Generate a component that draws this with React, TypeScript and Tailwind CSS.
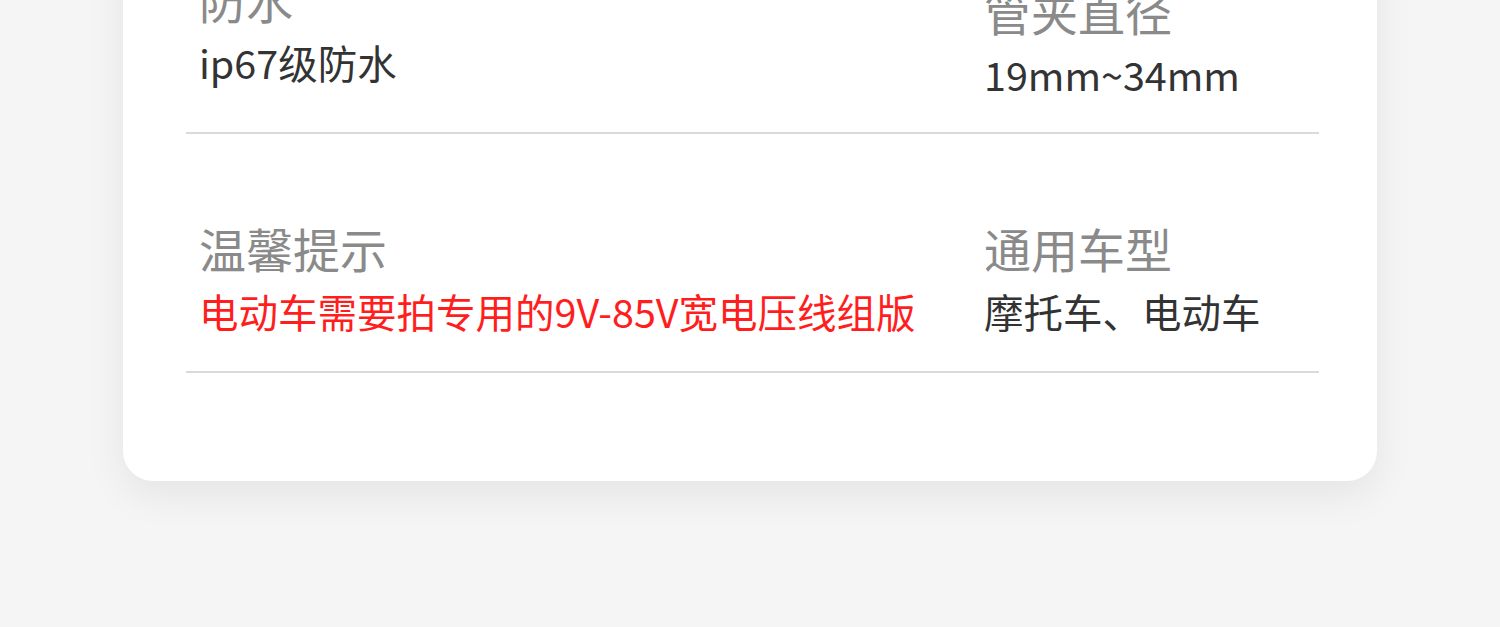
const font = { fontFamily: '"Noto Sans CJK SC", "Noto Sans", sans-serif' };

type Cell = { label: string; value: string; red?: boolean };

const rows: { left: Cell; right: Cell; lift?: boolean }[] = [
  {
    left: { label: "防水", value: "ip67级防水" },
    right: { label: "管夹直径", value: "19mm~34mm" },
    lift: true,
  },
  {
    left: { label: "温馨提示", value: "电动车需要拍专用的9V-85V宽电压线组版", red: true },
    right: { label: "通用车型", value: "摩托车、电动车" },
  },
];

function Spec({ cell }: { cell: Cell }) {
  return (
    <div>
      <p className="text-[47px] leading-[56px] text-[#8a8a8a]">{cell.label}</p>
      <p
        className={
          "mt-[11px] text-[39.5px] leading-[48px] whitespace-nowrap " +
          (cell.red ? "text-[#ff1e1e]" : "text-[#333333]")
        }
      >
        {cell.value}
      </p>
    </div>
  );
}

export default function App() {
  return (
    <div className="min-h-[627px] overflow-hidden bg-[#f5f5f5]" style={font}>
      <div className="mx-auto -mt-[105px] w-[1254px] rounded-[30px] bg-white pb-[108px] shadow-[0_14px_40px_rgba(0,0,0,0.07)]">
        <div className="ml-[63px] mr-[58px]">
          {rows.map((row, i) => (
            <div key={i} className="border-b-2 border-[#dadada]">
              <div
                className={
                  "flex items-end pl-[13px] " +
                  (i === 0 ? "pt-[76px] pb-[34px]" : "pt-[86px] pb-[36px]")
                }
              >
                <div className={"w-[785px] " + (row.lift ? "pb-[12px]" : "")}>
                  <Spec cell={row.left} />
                </div>
                <div className="flex-1">
                  <Spec cell={row.right} />
                </div>
              </div>
            </div>
          ))}
        </div>
      </div>
    </div>
  );
}
